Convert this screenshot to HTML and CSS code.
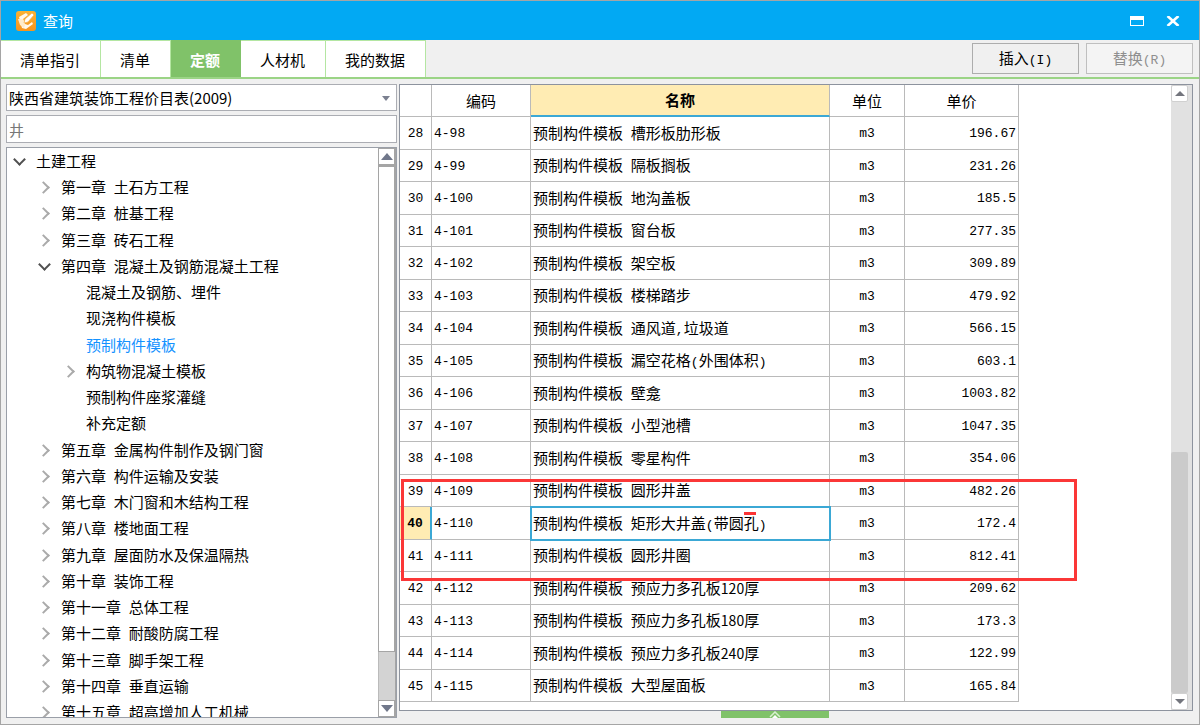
FILE: index.html
```html
<!DOCTYPE html>
<html lang="zh-CN">
<head>
<meta charset="utf-8">
<title>查询</title>
<link rel="stylesheet" href="styles.css">
</head>
<body>
<div class="window">
  <header class="titlebar">
    <svg class="logo" width="20" height="20" viewBox="0 0 20 20" aria-hidden="true">
      <defs><linearGradient id="g" x1="0" y1="0" x2="0" y2="1"><stop offset="0" stop-color="#f9b233"/><stop offset="1" stop-color="#f7941d"/></linearGradient></defs>
      <rect width="20" height="20" rx="3" fill="url(#g)"/>
      <path d="M3 6l7-4 2 2-5 4 2 5 3 1 4-3 1 2-7 5-4-1z" fill="#fff8ea"/>
      <path d="M2 8l5 0 2 6-1 3-4-3z" fill="#ffeccb"/>
      <path d="M8 12l1-4 7-6 2 2-6 7z" fill="#fff" stroke="#f5b04a" stroke-width=".7"/>
    </svg>
    <h1>查询</h1>
    <button class="win-btn" aria-label="最大化"><svg width="14" height="10" viewBox="0 0 14 10"><path d="M0 0h14v10H0zM1 4v5h12V4z" fill="#fff" fill-rule="evenodd"/></svg></button>
    <button class="win-btn" aria-label="关闭"><svg width="14" height="10" viewBox="0 0 14 10"><path d="M1.500 0L12.500 10M12.500 0L1.500 10" stroke="#fff" stroke-width="2.600"/></svg></button>
  </header>
  <nav class="toolbar">
    <button class="tab">清单指引</button><button class="tab">清单</button><button class="tab active">定额</button><button class="tab">人材机</button><button class="tab">我的数据</button>
    <div class="actions">
      <button class="action">插入<span class="half">(I)</span></button>
      <button class="action" disabled>替换<span class="half">(R)</span></button>
    </div>
  </nav>
  <main class="content">
    <aside class="side">
      <div class="combo">
        <select aria-label="定额库"><option>陕西省建筑装饰工程价目表(2009)</option></select>
        <svg width="8" height="5" viewBox="0 0 8 5"><path d="M0 0h8L4 5z" fill="#7b8090"/></svg>
      </div>
      <input class="search" type="text" aria-label="搜索" value="井">
      <div class="tree-box">
        <ul class="tree">
          <li class="open"><button aria-label="折叠"></button>土建工程</li>
          <li class="l1"><button aria-label="展开"></button>第一章<span class="half"> </span>土石方工程</li>
          <li class="l1"><button aria-label="展开"></button>第二章<span class="half"> </span>桩基工程</li>
          <li class="l1"><button aria-label="展开"></button>第三章<span class="half"> </span>砖石工程</li>
          <li class="l1 open"><button aria-label="折叠"></button>第四章<span class="half"> </span>混凝土及钢筋混凝土工程</li>
          <li class="l2 leaf">混凝土及钢筋、埋件</li>
          <li class="l2 leaf">现浇构件模板</li>
          <li class="l2 leaf current">预制构件模板</li>
          <li class="l2"><button aria-label="展开"></button>构筑物混凝土模板</li>
          <li class="l2 leaf">预制构件座浆灌缝</li>
          <li class="l2 leaf">补充定额</li>
          <li class="l1"><button aria-label="展开"></button>第五章<span class="half"> </span>金属构件制作及钢门窗</li>
          <li class="l1"><button aria-label="展开"></button>第六章<span class="half"> </span>构件运输及安装</li>
          <li class="l1"><button aria-label="展开"></button>第七章<span class="half"> </span>木门窗和木结构工程</li>
          <li class="l1"><button aria-label="展开"></button>第八章<span class="half"> </span>楼地面工程</li>
          <li class="l1"><button aria-label="展开"></button>第九章<span class="half"> </span>屋面防水及保温隔热</li>
          <li class="l1"><button aria-label="展开"></button>第十章<span class="half"> </span>装饰工程</li>
          <li class="l1"><button aria-label="展开"></button>第十一章<span class="half"> </span>总体工程</li>
          <li class="l1"><button aria-label="展开"></button>第十二章<span class="half"> </span>耐酸防腐工程</li>
          <li class="l1"><button aria-label="展开"></button>第十三章<span class="half"> </span>脚手架工程</li>
          <li class="l1"><button aria-label="展开"></button>第十四章<span class="half"> </span>垂直运输</li>
          <li class="l1"><button aria-label="展开"></button>第十五章<span class="half"> </span>超高增加人工机械</li>
        </ul>
        <div class="scroll tree-scroll">
          <button aria-label="向上滚动"><svg width="12" height="7" viewBox="0 0 12 7"><path d="M0 7h12L6 0z" fill="#70778a"/></svg></button>
          <div class="thumb"></div>
          <div class="rest"></div>
          <button aria-label="向下滚动"><svg width="12" height="7" viewBox="0 0 12 7"><path d="M0 0h12L6 7z" fill="#70778a"/></svg></button>
        </div>
      </div>
    </aside>
    <section class="main">
      <div class="grid-box">
        <div class="table-area">
          <table>
            <colgroup><col class="c-no"><col class="c-code"><col class="c-name"><col class="c-unit"><col class="c-price"></colgroup>
            <thead><tr><th></th><th>编码</th><th class="sorted">名称</th><th>单位</th><th>单价</th></tr></thead>
            <tbody>
              <tr><td>28</td><td>4-98</td><td>预制构件模板<span class="half"> </span>槽形板肋形板</td><td>m3</td><td>196.67</td></tr>
              <tr><td>29</td><td>4-99</td><td>预制构件模板<span class="half"> </span>隔板搁板</td><td>m3</td><td>231.26</td></tr>
              <tr><td>30</td><td>4-100</td><td>预制构件模板<span class="half"> </span>地沟盖板</td><td>m3</td><td>185.5</td></tr>
              <tr><td>31</td><td>4-101</td><td>预制构件模板<span class="half"> </span>窗台板</td><td>m3</td><td>277.35</td></tr>
              <tr><td>32</td><td>4-102</td><td>预制构件模板<span class="half"> </span>架空板</td><td>m3</td><td>309.89</td></tr>
              <tr><td>33</td><td>4-103</td><td>预制构件模板<span class="half"> </span>楼梯踏步</td><td>m3</td><td>479.92</td></tr>
              <tr><td>34</td><td>4-104</td><td>预制构件模板<span class="half"> </span>通风道<span class="half">,</span>垃圾道</td><td>m3</td><td>566.15</td></tr>
              <tr><td>35</td><td>4-105</td><td>预制构件模板<span class="half"> </span>漏空花格<span class="half">(</span>外围体积<span class="half">)</span></td><td>m3</td><td>603.1</td></tr>
              <tr><td>36</td><td>4-106</td><td>预制构件模板<span class="half"> </span>壁龛</td><td>m3</td><td>1003.82</td></tr>
              <tr><td>37</td><td>4-107</td><td>预制构件模板<span class="half"> </span>小型池槽</td><td>m3</td><td>1047.35</td></tr>
              <tr><td>38</td><td>4-108</td><td>预制构件模板<span class="half"> </span>零星构件</td><td>m3</td><td>354.06</td></tr>
              <tr><td>39</td><td>4-109</td><td>预制构件模板<span class="half"> </span>圆形井盖</td><td>m3</td><td>482.26</td></tr>
              <tr class="selected"><td>40</td><td>4-110</td><td>预制构件模板<span class="half"> </span>矩形大井盖<span class="half">(</span>带圆<span class="marked">孔</span><span class="half">)</span></td><td>m3</td><td>172.4</td></tr>
              <tr><td>41</td><td>4-111</td><td>预制构件模板<span class="half"> </span>圆形井圈</td><td>m3</td><td>812.41</td></tr>
              <tr><td>42</td><td>4-112</td><td>预制构件模板<span class="half"> </span>预应力多孔板<span class="num">120</span>厚</td><td>m3</td><td>209.62</td></tr>
              <tr><td>43</td><td>4-113</td><td>预制构件模板<span class="half"> </span>预应力多孔板<span class="num">180</span>厚</td><td>m3</td><td>173.3</td></tr>
              <tr><td>44</td><td>4-114</td><td>预制构件模板<span class="half"> </span>预应力多孔板<span class="num">240</span>厚</td><td>m3</td><td>122.99</td></tr>
              <tr><td>45</td><td>4-115</td><td>预制构件模板<span class="half"> </span>大型屋面板</td><td>m3</td><td>165.84</td></tr>
            </tbody>
          </table>
        </div>
        <div class="scroll grid-scroll">
          <button aria-label="向上滚动"><svg width="10" height="5" viewBox="0 0 10 5"><path d="M0 5h10L5 0z" fill="#73757d"/></svg></button>
          <div class="rest"></div>
          <div class="thumb"></div>
          <button aria-label="向下滚动"><svg width="10" height="5" viewBox="0 0 10 5"><path d="M0 0h10L5 5z" fill="#73757d"/></svg></button>
        </div>
        <div class="annotation"></div>
      </div>
      <div class="handle-row"><button class="handle" aria-label="展开"><svg width="12" height="7" viewBox="0 0 12 7"><path d="M1 6l5-5 5 5" fill="none" stroke="#d9f0d0" stroke-width="1.500"/><path d="M3 7l3-3 3 3z" fill="#fff"/></svg></button></div>
    </section>
  </main>
</div>
</body>
</html>
```
FILE: styles.css
```css
* { box-sizing: border-box; }
body {
  margin: 0;
  font: 15px/20px "Noto Sans CJK SC", sans-serif;
  color: #000;
}
button, input, select { font: inherit; color: inherit; margin: 0; padding: 0; border-radius: 0; }
.half { font-family: "Liberation Mono", monospace; font-size: 13px; white-space: pre; }
.num { font-size: 14px; }

.window {
  display: flex;
  flex-direction: column;
  height: 100vh;
  border: 1px solid #a5a5a5;
  background: #f0f0f0;
  overflow: hidden;
}

.titlebar {
  display: flex;
  align-items: center;
  flex: none;
  height: 39px;
  padding: 0 11px 0 15px;
  background: #02a9f3;
  color: #fff;
}
.titlebar h1 { flex: 1; margin: 0 0 0 7px; font-size: 15px; font-weight: 400; }
.win-btn {
  display: flex;
  align-items: center;
  justify-content: center;
  width: 30px;
  height: 30px;
  margin-left: 6px;
  border: 0;
  background: none;
}

.toolbar {
  display: flex;
  flex: none;
  height: 39px;
  border-bottom: 2px solid #9bd486;
}
.tab {
  padding: 2px 20px 0 19px;
  border: 0;
  border-right: 1px solid #b4e6a2;
  border-top: 1px solid #b4e6a2;
  background: #fff;
}
.tab.active { background: #80c269; border-color: #80c269; color: #fff; font-weight: 700; }
.actions { display: flex; gap: 7px; margin: 3px 6px 3px auto; }
.action { width: 107px; padding-top: 2px; border: 1px solid #adadad; background: #f0f0f0; }
.action:disabled { border-color: #bfbfbf; background: #f4f4f4; color: #8f8f8f; }

.content { display: flex; gap: 2px; flex: 1; min-height: 0; padding: 5px 6px 6px 5px; }

.side { display: flex; flex-direction: column; flex: none; width: 391px; }
.combo { display: flex; align-items: center; flex: none; height: 27px; border: 1px solid #abadb3; background: #fff; }
.combo select { appearance: none; flex: 1; height: 24px; padding: 0 2px; border: 0; background: none; }
.combo svg { margin: 2px 6px 0 0; }
.search { flex: none; width: 100%; height: 28px; margin: 4px 0; padding: 0 2px; border: 1px solid #abadb3; background: #fff; color: #777; }
.tree-box { display: flex; flex: 1; min-height: 0; border: 1px solid #9a9fa8; background: #fff; overflow: hidden; }
.tree { flex: 1; margin: 0; padding: 0 0 0 7px; list-style: none; }
.tree li { display: flex; align-items: center; height: 26px; white-space: pre; }
.tree li:nth-child(4n) { height: 27px; }
.tree .l1 { padding-left: 25px; }
.tree .l2 { padding-left: 50px; }
.tree .leaf { padding-left: 72px; }
.tree .current { color: #1492ff; }
.tree button { width: 10px; height: 16px; margin-right: 12px; border: 0; background: none; display: flex; align-items: flex-start; justify-content: center; padding-top: 4px; }
.tree button::before {
  content: "";
  flex: none;
  width: 7px;
  height: 7px;
  margin-right: 2px;
  border: solid #aaa;
  border-width: 2px 2px 0 0;
  transform: rotate(45deg);
}
.tree .open button { padding-top: 2px; }
.tree .open button::before { margin-right: 0; border-color: #505050; transform: rotate(135deg); }

.scroll { display: flex; flex-direction: column; flex: none; }
.scroll button { display: flex; align-items: center; justify-content: center; flex: none; height: 17px; background: #fff; }
.tree-scroll { width: 18px; border-right: 1px solid #a5a5a5; background: #d3d3d3; }
.tree-scroll button { border: 1px solid #a5a5a5; }
.tree-scroll .thumb { flex: 488; border: 1px solid #a5a5a5; border-top-width: 2px; background: #fff; }
.tree-scroll .rest { flex: 48; border-left: 1px solid #bbb; }

.main { display: flex; flex-direction: column; flex: 1; min-width: 0; }
.grid-box { position: relative; display: flex; flex: 1; min-height: 0; border: 1px solid #8d939e; background: #fff; }
.table-area { flex: 1; min-width: 0; overflow: hidden; }
table { border-collapse: separate; border-spacing: 0; table-layout: fixed; width: 619px; }
.c-no { width: 32px; }
.c-code { width: 99px; }
.c-name { width: 299px; }
.c-unit { width: 75px; }
.c-price { width: 114px; }
th, td { height: 32px; padding: 2px 2px 0; border: solid #bababa; border-width: 0 1px 1px 0; font-weight: 400; white-space: nowrap; text-align: left; }
tbody tr:nth-child(odd) td { height: 33px; }
th { padding-top: 0; text-align: center; }
th.sorted { background: #ffecb3; border-bottom: 2px solid #3ba8d5; font-weight: 700; }
td { font-family: "Liberation Mono", monospace; font-size: 13px; }
td:nth-child(3) { font: 15px/20px "Noto Sans CJK SC", sans-serif; }
td:nth-child(1), td:nth-child(4) { text-align: center; }
td:nth-child(5) { text-align: right; }
.selected td:nth-child(1) { background: #ffecb3; border-right: 2px solid #3ba8d5; font-weight: 700; }
.selected td:nth-child(3) { outline: 2px solid #3ba8d5; outline-offset: -1px; }
.marked { position: relative; }
.marked::before { content: ""; position: absolute; left: 0; top: 0; width: 12px; height: 3px; background: #fb3434; }

.grid-scroll { width: 21px; padding-right: 4px; background: #e1e1e1; }
.grid-scroll button { border: 1px solid #d0d0d0; border-radius: 2px; }
.grid-scroll .rest { flex: 350; }
.grid-scroll .thumb { flex: 241; border-radius: 2px; background: #cbcbcb; }
.annotation { position: absolute; left: 1px; top: 394px; width: 676px; height: 102px; border: 3px solid #fb3737; pointer-events: none; }

.handle-row { display: flex; flex: none; justify-content: center; padding-right: 42px; }
.handle { display: flex; justify-content: center; align-items: flex-start; width: 108px; height: 7px; border: 0; background: #80c269; }
.handle svg { display: block; }
```
